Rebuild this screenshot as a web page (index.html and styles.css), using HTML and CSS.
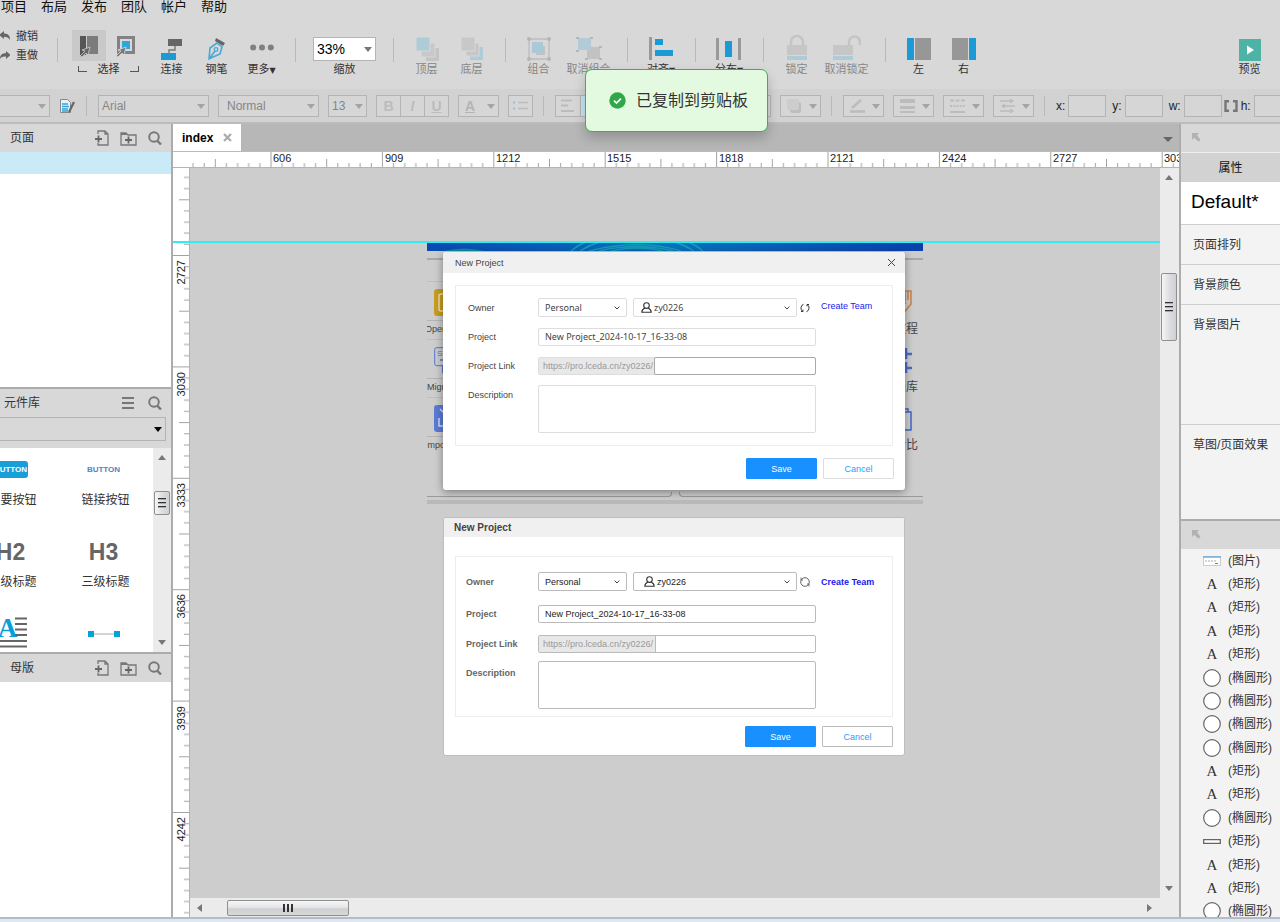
FILE: index.html
```html
<!DOCTYPE html>
<html lang="zh-CN">
<head>
<meta charset="utf-8">
<title>index</title>
<link rel="stylesheet" href="styles.css">
</head>
<body>
<svg class="defs" width="0" height="0" aria-hidden="true">
  <symbol id="search" viewBox="0 0 14 14"><circle cx="6" cy="6" r="4.800" fill="none" stroke="#777" stroke-width="1.900"/><path d="M9 9.500l4 4" stroke="#777" stroke-width="2.400"/></symbol>
  <symbol id="addpage" viewBox="0 0 14 16"><path d="M3 4V1h7l3 3v11H3v-2M10 1v3h3" fill="none" stroke="#777" stroke-width="1.300"/><path d="M0 9h7M3.500 5.500v7" stroke="#666" stroke-width="1.800"/></symbol>
  <symbol id="addfolder" viewBox="0 0 17 15"><path d="M1 14V2h5l2 2h8v10z" fill="none" stroke="#777" stroke-width="1.300"/><path d="M1 2h5l1 2H1z" fill="#777"/><path d="M5 9h7M8.500 5.500v7" stroke="#666" stroke-width="1.800"/></symbol>
  <symbol id="corner" viewBox="0 0 10 10"><path d="M1 0h7L6 2.200l3.500 4.600-2 2L3.200 4.800 1 7z" fill="#b2b2b2"/></symbol>
  <symbol id="chev" viewBox="0 0 6 4"><path d="M.6.6L3 3 5.400.6" fill="none" stroke="#444"/></symbol>
  <symbol id="user" viewBox="0 0 11 11"><circle cx="5.500" cy="3.600" r="2.800" fill="none" stroke="#333" stroke-width="1.100"/><path d="M3.800 6C2 7 .8 8 .8 10.200h9.400C10.200 8 9 7 7.200 6" fill="none" stroke="#333" stroke-width="1.100"/></symbol>
  <symbol id="box-oval" viewBox="0 0 18 18"><circle cx="9" cy="9" r="8.300" fill="#fff" stroke="#666" stroke-width="1.200"/></symbol>
</svg>

<nav class="menu">
  <button>项目</button><button>布局</button><button>发布</button><button>团队</button><button>帐户</button><button>帮助</button>
</nav>

<div class="toolbar">
  <div class="history">
    <button><svg width="10" height="10" viewBox="0 0 10 10"><path d="M4 0v2.500c4 0 6 2 6 6.500C8.500 6.500 7 5.800 4 5.800V8L-1 4z" fill="#666"/></svg>撤销</button>
    <button><svg width="10" height="10" viewBox="0 0 10 10"><path d="M6 1l4.500 4L6 9V6.500C3 6.300 1 7 0 9c0-4 2-5.700 6-5.700z" fill="#666"/></svg>重做</button>
  </div>
  <i class="sep"></i>
  <div class="select-tools">
    <div class="pair">
      <button class="on" aria-label="相交选中"><svg width="22" height="22" viewBox="0 0 22 22"><path d="M2 1h6v19H2z" fill="#555"/><path d="M9 1h11v18H9z" fill="#7c7c7c"/><path d="M2 21l5-5-3-1 8-3-2 8-2-2-4 4z" fill="#666" stroke="#ccc" stroke-width=".8"/></svg></button>
      <button aria-label="包含选中"><svg width="22" height="22" viewBox="0 0 22 22"><path d="M3.500 2.500h15v15h-15z" fill="#d8d8d8" stroke="#828282" stroke-width="3"/><path d="M7 6h8v8H7z" fill="#32a4dc"/><path d="M1 21l5-5-3-1 8-3-2 8-2-2-4 4z" fill="#777" stroke="#ddd" stroke-width=".8"/></svg></button>
    </div>
    <div class="bracket"><i></i><span>选择</span><i class="r"></i></div>
  </div>
  <button class="tool"><svg width="24" height="24" viewBox="0 0 24 24"><path d="M8 2h14v7H8z" fill="#666"/><path d="M15 9v4H9v4" fill="none" stroke="#777" stroke-width="1.400"/><path d="M1 16h15v7H1z" fill="#1c9ad6"/></svg>连接</button>
  <button class="tool"><svg width="24" height="24" viewBox="0 0 24 24"><path d="M11 1l9 5-2 3-8-5z" fill="#666"/><path d="M4 22L5 11l7-5 5 4-2 7-7 3zM4 22l6-8" fill="none" stroke="#46a9d8" stroke-width="1.600"/><circle cx="11" cy="12.500" r="1.800" fill="none" stroke="#46a9d8" stroke-width="1.300"/></svg>钢笔</button>
  <button class="tool"><svg width="24" height="24" viewBox="0 0 24 24"><g fill="#808080"><circle cx="3.200" cy="10.500" r="3"/><circle cx="12" cy="10.500" r="3"/><circle cx="20.800" cy="10.500" r="3"/></g></svg><span>更多<small>▼</small></span></button>
  <i class="sep"></i>
  <div class="zoom">
    <div class="sel"><select id="zoom"><option>33%</option></select></div>
    <label for="zoom">缩放</label>
  </div>
  <i class="sep"></i>
  <button class="tool off" disabled><svg width="24" height="24" viewBox="0 0 24 24"><path d="M11 11h13v13H11z" fill="#c4c4c4"/><path d="M6 6h14v14H6z" fill="#c8c8c8" stroke="#d8d8d8"/><path d="M1 0h14v14H1z" fill="#aecbd8" stroke="#d8d8d8"/></svg>顶层</button>
  <button class="tool off" disabled><svg width="24" height="24" viewBox="0 0 24 24"><path d="M10 10h13v13H10z" fill="#aecbd8"/><path d="M6 6h13v13H6z" fill="#c6c6c6" stroke="#d8d8d8"/><path d="M1 0h14v14H1z" fill="#c8c8c8" stroke="#d8d8d8"/></svg>底层</button>
  <i class="sep"></i>
  <button class="tool off" disabled><svg width="26" height="24" viewBox="0 0 26 24"><path d="M3 2h20v20H3z" fill="none" stroke="#bcbcbc" stroke-width="1.300"/><g fill="#b5b5b5"><circle cx="3" cy="2" r="2"/><circle cx="23" cy="2" r="2"/><circle cx="3" cy="22" r="2"/><circle cx="23" cy="22" r="2"/></g><path d="M10 9h9v9h-9z" fill="#c2c2c2"/><path d="M6 5h11v11H6z" fill="#aac9d7"/></svg>组合</button>
  <button class="tool wide off" disabled><svg width="26" height="24" viewBox="0 0 26 24"><path d="M11 10h13v12H11z" fill="#c2c2c2"/><path d="M2 1h13v12H2z" fill="#b3cbd6"/><g fill="#b5b5b5"><path d="M0 0h3v2H0zM14 0h3v2h-3zM0 13h3v2H0zM23 9h3v2h-3zM9 21h3v2H9zM23 21h3v2h-3z"/></g></svg>取消组合</button>
  <i class="sep"></i>
  <button class="tool mid"><svg width="26" height="24" viewBox="0 0 26 24"><path d="M1 0h3v23H1z" fill="#999"/><path d="M7 2h8v6H7zM7 13h18v6H7z" fill="#1c9ad6"/></svg><span>对齐<small>▼</small></span></button>
  <i class="sep"></i>
  <button class="tool mid"><svg width="26" height="24" viewBox="0 0 26 24"><path d="M0 1h3v22H0zM22 1h3v22h-3z" fill="#999"/><path d="M9 4h7v16H9z" fill="#1c9ad6"/></svg><span>分布<small>▼</small></span></button>
  <i class="sep"></i>
  <button class="tool off" disabled><svg width="22" height="26" viewBox="0 0 22 26"><path d="M5 12V7a6 6 0 0 1 12 0v5" fill="none" stroke="#c4c4c4" stroke-width="2.500"/><path d="M1 10h20v10H1z" fill="#c6c6c6"/><path d="M1 21h20v4H1z" fill="#aecbd8"/></svg>锁定</button>
  <button class="tool wide off" disabled><svg width="28" height="26" viewBox="0 0 28 26"><path d="M16 11V7a5.500 5.500 0 0 1 11 0v3" fill="none" stroke="#c4c4c4" stroke-width="2.500"/><path d="M0 10h20v10H0z" fill="#c6c6c6"/><path d="M0 21h20v4H0z" fill="#aecbd8"/></svg>取消锁定</button>
  <i class="sep"></i>
  <button class="tool"><svg width="24" height="24" viewBox="0 0 24 24"><path d="M0 1h7v22H0z" fill="#1c9ad6"/><path d="M8 1h16v22H8z" fill="#979797"/></svg>左</button>
  <button class="tool"><svg width="24" height="24" viewBox="0 0 24 24"><path d="M17 1h7v22h-7z" fill="#1c9ad6"/><path d="M0 1h16v22H0z" fill="#979797"/></svg>右</button>
  <button class="tool preview"><svg width="22" height="22" viewBox="0 0 22 22"><path d="M0 0h22v22H0z" fill="#4db3a4"/><path d="M8 6.500l7 4.500-7 4.500z" fill="#fff"/></svg>预览</button>
</div>

<div class="stylebar">
  <div class="sel w50"><select disabled aria-label="样式"><option></option></select></div>
  <button class="page-style" aria-label="样式管理"><svg width="17" height="16" viewBox="0 0 17 16"><path d="M1.500 1.500h7l3 3v10h-10z" fill="#e6f2f8" stroke="#888"/><path d="M3 6h6M3 8.500h7M3 11h6M3 13h6" stroke="#32a4dc" stroke-width="1.300"/><path d="M15 4l-5 10" stroke="#666" stroke-width="2.200"/></svg></button>
  <i class="sep"></i>
  <div class="sel w111"><select disabled aria-label="字体"><option>Arial</option></select></div>
  <div class="sel w101"><select disabled aria-label="字形"><option>Normal</option></select></div>
  <div class="sel w39"><select disabled aria-label="字号"><option>13</option></select></div>
  <div class="group w73"><button disabled><b>B</b></button><button disabled><b><em>I</em></b></button><button disabled><b><u>U</u></b></button></div>
  <button class="drop" disabled><u>A</u></button>
  <button class="box" disabled aria-label="列表"><svg width="15" height="12" viewBox="0 0 15 12"><path d="M5 2.500h10M5 8.500h10" stroke="#bcbcbc" stroke-width="1.500"/><path d="M0 1.500h2v2H0zM0 7.500h2v2H0z" fill="#8cc3dc"/></svg></button>
  <i class="sep"></i>
  <div class="group w75"><button disabled aria-label="左对齐"><svg width="14" height="14" viewBox="0 0 14 14"><path d="M0 1.500h11M0 6.500h7M0 12h13" stroke="#bcbcbc" stroke-width="2"/></svg></button><button class="lit" disabled aria-label="居中"></button><button disabled aria-label="右对齐"></button></div>
  <div class="group w82"><button disabled aria-label="顶部"></button><button disabled aria-label="中部"></button><button disabled aria-label="底部"></button></div>
  <button class="drop" disabled aria-label="填充"></button>
  <button class="drop" disabled aria-label="阴影"><svg width="15" height="14" viewBox="0 0 15 14"><rect x="3" y="3" width="11" height="11" rx="2" fill="#bebebe"/><rect x="0" y="0" width="12" height="11" rx="2" fill="#cdcdcd"/></svg></button>
  <i class="sep"></i>
  <button class="drop" disabled aria-label="线段颜色"><svg width="15" height="14" viewBox="0 0 15 14"><path d="M2 9l9-8M0 12.500h15" stroke="#bcbcbc" stroke-width="2.500"/></svg></button>
  <button class="drop" disabled aria-label="线宽"><svg width="15" height="14" viewBox="0 0 15 14"><path d="M0 0h15v4H0zM0 7h15v3H0zM0 12h15v2H0z" fill="#bcbcbc"/></svg></button>
  <button class="drop" disabled aria-label="线段类型"><svg width="15" height="14" viewBox="0 0 15 14"><path d="M0 1.500h15" stroke="#bcbcbc" stroke-width="2" stroke-dasharray="4 1.500"/><path d="M0 7h15" stroke="#bcbcbc" stroke-width="2" stroke-dasharray="2 1.200"/><path d="M0 13h15" stroke="#bcbcbc" stroke-width="2"/></svg></button>
  <button class="drop" disabled aria-label="箭头样式"><svg width="15" height="14" viewBox="0 0 15 14"><path d="M0 2h13M2 7h13M0 12h13M10 0l3 2-3 2M5 5L2 7l3 2M10 10l3 2-3 2" fill="none" stroke="#bcbcbc" stroke-width="1.300"/></svg></button>
  <i class="sep"></i>
  <div class="coords">
    <label>x:<input disabled></label><label>y:<input disabled></label><label>w:<input disabled></label>
    <svg width="14" height="12" viewBox="0 0 14 12"><path d="M5 1.200H1.500v9.600H5M9 1.200h3.500v9.600H9" fill="none" stroke="#777" stroke-width="2.400"/></svg>
    <label>h:<input disabled></label>
  </div>
</div>

<div class="workspace">
  <aside class="left">
    <section class="pages">
      <header><h2>页面</h2><button aria-label="添加页面"><svg width="14" height="16"><use href="#addpage"/></svg></button><button aria-label="添加文件夹"><svg width="17" height="15"><use href="#addfolder"/></svg></button><button aria-label="搜索"><svg width="14" height="14"><use href="#search"/></svg></button></header>
      <div class="current-page"></div>
    </section>
    <section class="library">
      <header class="near"><h2>元件库</h2><button aria-label="选项"><svg width="12" height="12" viewBox="0 0 12 12"><path d="M0 1h12M0 6h12M0 11h12" stroke="#777" stroke-width="2"/></svg></button><button aria-label="搜索"><svg width="14" height="14"><use href="#search"/></svg></button></header>
      <div class="lib-pick"><div class="sel"><select aria-label="选择元件库"><option></option></select></div></div>
      <div class="lib-body">
        <div class="widgets">
          <figure><div><span class="btn-pic">BUTTON</span></div><figcaption>主要按钮</figcaption></figure>
          <figure><div><span class="link-pic">BUTTON</span></div><figcaption>链接按钮</figcaption></figure>
          <figure><div class="h">H2</div><figcaption>二级标题</figcaption></figure>
          <figure><div class="h">H3</div><figcaption>三级标题</figcaption></figure>
          <figure><div class="para"><b>A</b><svg width="38" height="32" viewBox="0 0 38 32"><path d="M26 1.500h12M26 7h12M26 12.500h12M26 18h12M0 24h38M0 29.500h38" stroke="#666" stroke-width="2"/></svg></div></figure>
          <figure><div><svg width="32" height="6" viewBox="0 0 32 6"><path d="M3 3h26" stroke="#aaa"/><path d="M0 0h6v6H0zM26 0h6v6h-6z" fill="#069fdc"/></svg></div></figure>
        </div>
        <div class="vbar lib-bar"><i class="up"></i><i class="thumb"></i><i class="down"></i></div>
      </div>
    </section>
    <section class="masters">
      <header><h2>母版</h2><button aria-label="添加母版"><svg width="14" height="16"><use href="#addpage"/></svg></button><button aria-label="添加文件夹"><svg width="17" height="15"><use href="#addfolder"/></svg></button><button aria-label="搜索"><svg width="14" height="14"><use href="#search"/></svg></button></header>
    </section>
  </aside>

  <main class="center">
    <div class="tabs"><div class="tab">index<button aria-label="关闭"><svg width="9" height="9" viewBox="0 0 9 9"><path d="M1 1l7 7M8 1L1 8" stroke="#aaa" stroke-width="2.200"/></svg></button></div><i class="tab-more"></i></div>
    <svg class="ruler-h" aria-hidden="true">
      <defs><pattern id="th" x="97.500" y="0" width="111.400" height="16" patternUnits="userSpaceOnUse"><path d="M.5 0v16M56.200 7v9M11.600 11v5M22.800 11v5M33.900 11v5M45.100 11v5M67.300 11v5M78.500 11v5M89.600 11v5M100.800 11v5" stroke="#a2a2a2"/></pattern></defs>
      <rect x="17" width="100%" height="16" fill="url(#th)"/>
      <text x="100" y="10">606</text><text x="212" y="10">909</text><text x="323" y="10">1212</text><text x="434" y="10">1515</text><text x="546" y="10">1818</text><text x="657" y="10">2121</text><text x="769" y="10">2424</text><text x="880" y="10">2727</text><text x="991" y="10">3030</text>
    </svg>
    <div class="mid-row">
      <svg class="ruler-v" aria-hidden="true">
        <defs><pattern id="tv" x="0" y="87" width="16" height="111.400" patternUnits="userSpaceOnUse"><path d="M0 .5h16M6 56.200h10M11 11.600h5M11 22.800h5M11 33.900h5M11 45.100h5M11 67.300h5M11 78.500h5M11 89.600h5M11 100.800h5" stroke="#a2a2a2"/></pattern></defs>
        <rect width="16" height="100%" fill="url(#tv)"/>
        <g text-anchor="end"><text transform="translate(12 92) rotate(-90)">2727</text><text transform="translate(12 204) rotate(-90)">3030</text><text transform="translate(12 315) rotate(-90)">3333</text><text transform="translate(12 426) rotate(-90)">3636</text><text transform="translate(12 538) rotate(-90)">3939</text><text transform="translate(12 649) rotate(-90)">4242</text></g>
      </svg>
      <div class="stage">
        <div class="canvas">
          <div class="shot">
            <svg class="banner" width="496" height="8" viewBox="0 0 496 8"><defs><linearGradient id="bg"><stop offset="0" stop-color="#0a49b4"/><stop offset=".5" stop-color="#0872c0"/><stop offset="1" stop-color="#0b3fae"/></linearGradient></defs><path d="M0 0h496v8H0z" fill="url(#bg)"/><path d="M16 8q22-5 42 0z" fill="#0c8da6"/><g fill="none" stroke="#159db9" stroke-width="1.500"><path d="M144 8q8-7 18-10M153 8q9-6 20-9M162 8q50-13 92 0M172 8q38-9 74 0M184 8q28-6 52 0M276 8q-8-7-18-10M267 8q-9-6-20-9"/></g></svg>
            <div class="shot-body">
              <div class="cells"><div><svg width="26" height="27" viewBox="0 0 26 27"><rect width="26" height="27" rx="3" fill="#c79d22"/><rect x="5" y="5" width="16" height="17" rx="2" fill="none" stroke="#efe2ac" stroke-width="1.500"/></svg><span class="cut">Open</span></div><div><svg width="26" height="27" viewBox="0 0 26 27"><rect x=".7" y=".7" width="24" height="18" rx="2" fill="none" stroke="#5674cc"/><path d="M8 18h18v9H10q-2 0-2-3z" fill="#5674cc"/><path d="M6 13h4" stroke="#5674cc" stroke-width="1.500"/><text x="3" y="9" class="tiny">STD</text></svg><span>Migrate</span></div><div><svg width="26" height="27" viewBox="0 0 26 27"><rect width="26" height="27" rx="3" fill="#5b7bd6"/><path d="M6 4l6 6M5 13v8h8M12 13v9" fill="none" stroke="#d5dcf0" stroke-width="1.500"/></svg><span class="cut">Import</span></div></div>
              <div class="cells cells-end"><div><svg width="26" height="27" viewBox="0 0 26 27"><path d="M10 14V2h15v13l-8 10M19 2v10M22 2v9M12 14l8 0" fill="none" stroke="#cc8344" stroke-width="1.500"/></svg><span>教程</span></div><div><svg width="26" height="27" viewBox="0 0 26 27"><path d="M20 1v11M15 7h11M20 15v11M15 21h11" stroke="#4a6ecb" stroke-width="2.500"/></svg><span>画库</span></div><div><svg width="26" height="27" viewBox="0 0 26 27"><path d="M8 7h17v18H8zM22 7V4h-5" fill="none" stroke="#3f66cc" stroke-width="1.500"/></svg><span>对比</span></div></div>
            </div>
            <div class="shot-foot"><i></i><i></i></div>
          </div>

          <form class="dialog top">
            <header><h3>New Project</h3><button type="button" aria-label="Close"><svg width="9" height="9" viewBox="0 0 9 9"><path d="M1 1l7 7M8 1L1 8" stroke="#444"/></svg></button></header>
            <div class="fields">
              <label for="o1">Owner</label>
              <div class="owner"><div class="pick p1"><select id="o1"><option>Personal</option></select><svg width="6" height="4"><use href="#chev"/></svg></div><div class="pick p2"><svg class="face" width="11" height="11"><use href="#user"/></svg><select aria-label="Account"><option>zy0226</option></select><svg width="6" height="4"><use href="#chev"/></svg></div><button type="button" class="refresh" aria-label="Refresh"><svg width="10" height="10" viewBox="0 0 10 10"><path d="M3.500 1.300A4 4 0 0 0 2.300 8M6.500 8.700A4 4 0 0 0 7.700 2M1 8.500h2V6.700M9 1.500H7v1.800" fill="none" stroke="#333"/></svg></button><a href="#">Create Team</a></div>
              <label for="n1">Project</label><input id="n1" value="New Project_2024-10-17_16-33-08">
              <label for="l1">Project Link</label><div class="link"><span>https://pro.lceda.cn/zy0226/</span><input id="l1"></div>
              <label for="d1">Description</label><textarea id="d1"></textarea>
            </div>
            <footer><button type="button" class="primary">Save</button><button type="button">Cancel</button></footer>
          </form>

          <form class="dialog bottom">
            <header><h3>New Project</h3></header>
            <div class="fields">
              <label for="o2">Owner</label>
              <div class="owner"><div class="pick p1"><select id="o2"><option>Personal</option></select><svg width="6" height="4"><use href="#chev"/></svg></div><div class="pick p2"><svg class="face" width="11" height="11"><use href="#user"/></svg><select aria-label="Account"><option>zy0226</option></select><svg width="6" height="4"><use href="#chev"/></svg></div><button type="button" class="refresh" aria-label="Refresh"><svg width="10" height="10" viewBox="0 0 10 10"><circle cx="5" cy="5" r="4.300" fill="none" stroke="#555" stroke-width=".9"/><path d="M1 .5v2.500h2M9 9.500V7H7" fill="none" stroke="#555" stroke-width=".8"/></svg></button><a href="#">Create Team</a></div>
              <label for="n2">Project</label><input id="n2" value="New Project_2024-10-17_16-33-08">
              <label for="l2">Project Link</label><div class="link"><span>https://pro.lceda.cn/zy0226/</span><input id="l2"></div>
              <label for="d2">Description</label><textarea id="d2"></textarea>
            </div>
            <footer><button type="button" class="primary">Save</button><button type="button">Cancel</button></footer>
          </form>
        </div>
        <div class="hbar"><i class="prev"></i><i class="thumb"></i><i class="next"></i></div>
      </div>
      <div class="vbar main-bar"><i class="up"></i><i class="thumb"></i><i class="down"></i></div>
      <i class="guide"></i>
    </div>
  </main>

  <aside class="right">
    <div class="dock"><svg width="10" height="10"><use href="#corner"/></svg></div>
    <div class="prop-tab">属性</div>
    <div class="style-name">Default*</div>
    <div class="prop">页面排列</div>
    <div class="prop">背景颜色</div>
    <div class="prop tall">背景图片</div>
    <div class="prop last">草图/页面效果</div>
    <div class="dock outline"><svg width="10" height="10"><use href="#corner"/></svg></div>
    <ul class="tree">
      <li><svg width="18" height="10" viewBox="0 0 18 10"><path d="M.5.5h17v9H.5z" fill="#fff" stroke="#ccc"/><path d="M0 1h18" stroke="#6aaee0" stroke-width="1.500"/><path d="M2 5h12" stroke="#aaa" stroke-dasharray="2 1"/><path d="M12 7h3v1h-3z" fill="#3a92dc"/></svg>(图片)</li>
      <li><b>A</b>(矩形)</li><li><b>A</b>(矩形)</li><li><b>A</b>(矩形)</li><li><b>A</b>(矩形)</li>
      <li><svg width="18" height="18"><use href="#box-oval"/></svg>(椭圆形)</li><li><svg width="18" height="18"><use href="#box-oval"/></svg>(椭圆形)</li><li><svg width="18" height="18"><use href="#box-oval"/></svg>(椭圆形)</li><li><svg width="18" height="18"><use href="#box-oval"/></svg>(椭圆形)</li>
      <li><b>A</b>(矩形)</li><li><b>A</b>(矩形)</li>
      <li><svg width="18" height="18"><use href="#box-oval"/></svg>(椭圆形)</li>
      <li><svg width="18" height="5" viewBox="0 0 18 5"><path d="M.7.700h16.600v3.600H.7z" fill="#fff" stroke="#666" stroke-width="1.300"/></svg>(矩形)</li>
      <li><b>A</b>(矩形)</li><li><b>A</b>(矩形)</li>
      <li><svg width="18" height="18"><use href="#box-oval"/></svg>(椭圆形)</li>
    </ul>
  </aside>
</div>
<div class="taskedge"></div>

<div class="toast" role="status"><svg width="17" height="17" viewBox="0 0 17 17"><circle cx="8.500" cy="8.500" r="8.200" fill="#2fa84a"/><path d="M5 8.700l2.500 2.400L12 6.600" fill="none" stroke="#fff" stroke-width="1.700"/></svg>已复制到剪贴板</div>
</body>
</html>
```
FILE: styles.css
```css
* { box-sizing: border-box; }
body {
  margin: 0;
  height: 100vh;
  display: flex;
  flex-direction: column;
  overflow: hidden;
  position: relative;
  background: #d8d8d8;
  color: #333;
  font: 12px/16px "Liberation Sans", "Noto Sans CJK SC", sans-serif;
}
button, input, select, textarea {
  font: inherit;
  color: inherit;
  margin: 0;
  padding: 0;
  border: 0;
  background: none;
  border-radius: 0;
  min-width: 0;
}
select { appearance: none; width: 100%; height: 100%; opacity: 1; }
svg { display: block; flex: none; }
h2, h3, figure, ul { margin: 0; padding: 0; font-weight: normal; }
i { font-style: normal; }
.defs { position: absolute; }

.menu { display: flex; gap: 14px; height: 16px; padding-left: 1px; flex: none; }
.menu button { font-size: 13px; line-height: 14px; height: 14px; color: #111; white-space: nowrap; }

/* main toolbar */
.toolbar { display: flex; height: 73px; flex: none; padding-top: 14px; font-size: 11px; }
.history { display: flex; flex-direction: column; gap: 3px; width: 46px; flex: none; }
.history button { display: flex; align-items: center; gap: 6px; height: 16px; line-height: 16px; }
.history button:first-child { margin-top: -2px; }
.sep { width: 1px; height: 24px; margin: 8px 10px 0 11px; background: #b9b9b9; flex: none; }
.select-tools { width: 71px; margin: 0 6px 0 4px; flex: none; }
.pair { display: flex; gap: 4px; height: 31px; }
.pair button { width: 34px; display: grid; place-items: center; }
.pair .on { background: #c9c9c9; }
.bracket { display: flex; justify-content: space-between; padding: 0 4px 0 6px; align-items: center; height: 16px; }
.bracket i { width: 9px; height: 6px; border: solid #555; border-width: 0 0 1px 1px; }
.bracket .r { border-width: 0 1px 1px 0; }
.tool { width: 45px; flex: none; display: flex; flex-direction: column; align-items: center; height: 47px; justify-content: flex-end; line-height: 16px; white-space: nowrap; }
.tool small { font: 8px/8px "DejaVu Sans", sans-serif; }
.tool.wide { width: 55px; }
.tool.mid { width: 46px; }
.tool.off { color: #868686; }
.preview { margin: 0 8px 0 auto; }
.zoom { width: 76px; padding: 7px 6px 0 7px; flex: none; text-align: center; }
.zoom label { display: block; line-height: 16px; }
.zoom .sel { height: 24px; background: #fff; color: #000; font-size: 14px; }
.sel { position: relative; border: 1px solid #b4b4b4; flex: none; }
.sel select { padding: 0 14px 0 3px; }
.sel::after, .drop::after {
  content: "";
  position: absolute;
  right: 3px;
  top: 50%;
  border: 4px solid transparent;
  border-top: 5px solid #777;
  border-bottom: 0;
  margin-top: -2px;
}

/* style bar */
.stylebar { display: flex; gap: 9px; align-items: center; height: 35px; flex: none; background: #d2d2d2; border-bottom: 2px solid #bcbcbc; overflow: hidden; }
.stylebar .sep { height: 20px; margin: 0 2px 0 1px; }
.stylebar .sel, .drop, .box, .group { height: 22px; border: 1px solid #b4b4b4; flex: none; background: #d6d6d6; }
.stylebar .sel { color: #868686; }
.stylebar .sel::after, .drop::after { border-top-color: #a4a4a4; }
.stylebar .w50 { width: 50px; border-left: 0; }
.page-style { width: 17px; flex: none; }
.w111 { width: 111px; }
.w101 { width: 101px; }
.w101 select { padding-left: 8px; }
.stylebar .w39 { width: 39px; }
.w73 { width: 73px; }
.w75 { width: 75px; }
.w82 { width: 82px; }
.group { display: flex; }
.group button { flex: 1; display: grid; place-items: center; color: #bcbcbc; font-size: 14px; line-height: 16px; }
.group button + button { border-left: 1px solid #b4b4b4; }
.group .lit { background: #c4e6f3; }
.drop { position: relative; width: 41px; display: flex; align-items: center; padding-left: 6px; color: #b4b4b4; font-weight: bold; font-size: 14px; }
.box { width: 25px; display: grid; place-items: center; }
.coords { display: flex; align-items: center; gap: 6px; flex: none; }
.coords label { display: flex; align-items: center; gap: 3px; color: #222; }
.coords input { width: 38px; height: 22px; border: 1px solid #b4b4b4; background: #d6d6d6; }
.coords svg { margin: 0 -3px 0 -4px; }

.workspace { display: flex; flex: 1; min-height: 0; }

/* left panels */
.left { width: 173px; flex: none; border-right: 2px solid #acacac; display: flex; flex-direction: column; background: #fff; }
.left header { display: flex; align-items: center; gap: 11px; height: 28px; padding: 0 9px 0 10px; background: #d8d8d8; flex: none; }
.left header.near { padding-left: 4px; gap: 14px; }
.left h2 { flex: 1; font-size: 12px; line-height: 16px; }
.pages { height: 265px; flex: none; border-bottom: 2px solid #acacac; }
.current-page { height: 22px; background: #cbeaf7; }
.library { height: 265px; flex: none; border-bottom: 2px solid #acacac; display: flex; flex-direction: column; }
.lib-pick { background: #d8d8d8; height: 31px; padding: 0 5px 7px 0; flex: none; }
.lib-pick .sel { height: 24px; border-left: 0; }
.lib-pick .sel::after { border-top-color: #000; }
.lib-body { flex: 1; min-height: 0; display: flex; overflow: hidden; }
.widgets { flex: 1; min-width: 0; margin-left: -34px; display: grid; grid-template-columns: 93px 93px; grid-auto-rows: 82px; text-align: center; }
.widgets figure > div { height: 40px; display: flex; align-items: center; justify-content: center; padding: 3px 4px 0 0; }
.widgets figcaption { line-height: 24px; }
.btn-pic { background: #189ed9; color: #fff; border-radius: 3px; font: bold 8px/17px "Liberation Sans", sans-serif; width: 34px; }
.link-pic { color: #4a86c5; font: bold 8px/16px "Liberation Sans", sans-serif; }
.widgets figure > .h { font-size: 23px; font-weight: bold; color: #666; }
.widgets figure > .para { display: grid; padding: 2px 10px 0 0; }
.para > * { grid-area: 1 / 1; }
.para b { font: bold 27px/28px "Liberation Serif", serif; color: #069fdc; z-index: 1; align-self: start; }
.masters { flex: 1; }

/* scroll bars */
.vbar { display: flex; flex-direction: column; align-items: center; background: #ebebeb; flex: none; }
.lib-bar { width: 18px; padding: 7px 0; }
.main-bar { width: 19px; padding: 7px 1px 26px 0; }
.thumb { border: 1px solid #8f8f8f; border-radius: 2px; display: grid; place-items: center; }
.vbar .thumb { width: 16px; margin-bottom: auto; background: linear-gradient(90deg, #f6f6f6, #dcdde0 55%, #cfd0d3); }
.vbar .thumb::after { content: ""; width: 8px; height: 10px; background: repeating-linear-gradient(#333 0 1px, #aaa 1px 2px, transparent 2px 4px); }
.lib-bar .thumb { height: 24px; margin-top: 31px; }
.main-bar .thumb { height: 68px; margin-top: 93px; }
.up { border: 4px solid transparent; border-bottom: 5px solid #777; border-top: 0; }
.down { border: 4px solid transparent; border-top: 5px solid #777; border-bottom: 0; }
.hbar { height: 19px; flex: none; background: #ebebeb; display: flex; align-items: center; padding: 0 8px 0 7px; }
.hbar .thumb { width: 122px; height: 16px; margin: 0 auto 0 25px; background: linear-gradient(#f6f6f6, #e2e3e5 50%, #cfd0d3 55%, #d6d7d9); }
.hbar .thumb::after { content: ""; width: 10px; height: 8px; background: repeating-linear-gradient(90deg, #333 0 2px, transparent 2px 4px); }
.prev { border: 4px solid transparent; border-right: 5px solid #777; border-left: 0; }
.next { border: 4px solid transparent; border-left: 5px solid #777; border-right: 0; }

/* centre */
.center { flex: 1; min-width: 0; display: flex; flex-direction: column; }
.tabs { height: 27px; flex: none; background: #b7b7b7; display: flex; align-items: center; justify-content: space-between; padding-right: 6px; }
.tab { height: 27px; width: 68px; background: #fff; display: flex; align-items: center; justify-content: space-between; padding: 0 9px; font-weight: bold; color: #000; }
.tab-more { border: 5px solid transparent; border-top-color: #666; border-bottom: 0; margin-top: 4px; }
.ruler-h { width: 100%; height: 17px; background: #fff; border-top: 1px solid #bbb; border-bottom: 1px solid #b4b4b4; }
.ruler-h text, .ruler-v text { font: 11px "Liberation Sans", sans-serif; fill: #222; }
.mid-row { display: flex; flex: 1; min-height: 0; position: relative; }
.ruler-v { width: 17px; height: 100%; background: #fff; border-right: 1px solid #b4b4b4; }
.stage { flex: 1; min-width: 0; display: flex; flex-direction: column; }
.canvas { flex: 1; position: relative; background: #cdcdcd; overflow: hidden; }
.guide { position: absolute; left: 0; right: 19px; top: 73px; height: 2px; background: #2deef2; }

/* artboard picture */
.shot { position: absolute; left: 237px; top: 75px; width: 496px; height: 261px; display: flex; flex-direction: column; color: #444; font-size: 9px; }
.shot-body { flex: 1; margin-top: 7px; border-top: 2px solid #a8a8a8; display: flex; justify-content: space-between; }
.cells { width: 40px; padding-top: 21px; overflow: hidden; }
.cells div { height: 58px; padding: 7px 0 0; border-top: 1px solid #bebebe; display: flex; flex-direction: column; }
.cells svg { margin-left: 7px; }
.cells span { border-top: 1px solid #b4b4b4; margin-top: 4px; line-height: 16px; white-space: nowrap; }
.cells .cut { text-indent: -2px; }
.cells-end svg { margin-left: 3px; }
.cells-end div { border-top-color: #cdcdcd; }
.cells-end span { font-size: 12px; text-align: right; padding-right: 5px; border-top-color: #cdcdcd; }
.tiny { font: 8px "Liberation Sans", sans-serif; fill: #5674cc; }
.shot-foot { display: flex; gap: 7px; height: 12px; border-bottom: 4px solid #b9b9b9; padding-bottom: 3px; }
.shot-foot i { flex: 1; border: solid #999; border-width: 0 1px 1px 0; border-radius: 0 0 4px 0; }
.shot-foot i + i { border-width: 0 0 1px 1px; border-radius: 0 0 0 4px; }

/* project dialogs */
.dialog { position: absolute; left: 253px; width: 462px; background: #fff; border-radius: 3px; overflow: hidden; font-size: 9px; line-height: 12px; color: #444; }
.dialog.top { top: 84px; height: 238px; box-shadow: 0 2px 8px #0006; }
.dialog.bottom { top: 349px; height: 239px; border: 1px solid #bdbdbd; }
.dialog header { display: flex; justify-content: space-between; align-items: center; height: 21px; background: #f0f0f0; padding: 0 9px 0 12px; }
.dialog.bottom header { height: 19px; padding-left: 10px; }
.dialog h3 { font-size: inherit; }
.dialog.bottom h3 { font-size: 10px; font-weight: bold; }
.fields { margin: 12px 12px 0; height: 161px; border: 1px solid #ededed; padding: 7px 0 0 12px; display: grid; grid-template-columns: 70px 278px; grid-template-rows: 29px 29px 30px 56px; align-items: center; }
.bottom .fields { margin: 19px 11px 0; padding: 9px 0 0 10px; grid-template-columns: 72px 278px; grid-template-rows: 31px 34px 25px 58px; }
.bottom .fields > label { font-weight: bold; color: #666; }
.fields > label[for^="d"] { align-self: start; padding-top: 8px; }
.bottom .fields > label[for^="d"] { padding-top: 11px; }
.fields > input, .fields textarea, .link, .pick { border: 1px solid #ddd; border-radius: 2px; background: #fff; width: 100%; height: 18px; }
.bottom .fields > input, .bottom textarea, .bottom .link, .bottom .pick { border-color: #bbb; }
.fields > input { padding-left: 6px; }
.top .fields > input, .top .pick { font-family: "Noto Sans", sans-serif; }
.bottom .fields > input, .bottom select { color: #222; }
.fields textarea { resize: none; display: block; height: 48px; }
.owner { display: flex; height: 19px; align-items: center; white-space: nowrap; }
.fields .pick { display: flex; align-items: center; padding: 0 6px; flex: none; height: 19px; }
.fields .p1 { width: 89px; margin-right: 6px; }
.fields .p2 { width: 164px; padding-left: 7px; gap: 2px; }
.bottom .p2 { padding-left: 10px; }
.refresh { flex: none; margin: 0 11px 0 3px; }
.owner a { flex: none; color: #1a1aef; text-decoration: none; }
.top .owner a { padding-bottom: 4px; }
.bottom .owner a { font-weight: bold; }
.link { display: flex; }
.link span { width: 116px; flex: none; background: #e8e8e8; color: #999; line-height: 16px; padding-left: 4px; }
.link input { flex: 1; border-left: 1px solid #bbb; }
.top .link input { border: 1px solid #aaa; border-radius: 2px; margin: -1px; }
.dialog footer { display: flex; justify-content: flex-end; gap: 6px; padding: 12px 11px 0; }
.bottom footer { padding: 9px 11px 0; }
.dialog footer button { width: 71px; height: 21px; border: 1px solid #ddd; border-radius: 1px; color: #2e9bff; }
.bottom footer button { border-color: #bbb; }
.dialog footer .primary { background: #1890ff; border-color: #1890ff; color: #fff; }

/* right panel */
.right { width: 101px; flex: none; border-left: 2px solid #acacac; background: #f3f3f3; display: flex; flex-direction: column; overflow: hidden; }
.dock { height: 28px; padding: 9px 10px; background: #d8d8d8; flex: none; }
.prop-tab { height: 30px; line-height: 30px; border-top: 1px solid #eee; background: #d2d2d2; text-align: center; color: #111; flex: none; }
.style-name { height: 42px; line-height: 40px; padding-left: 10px; background: #fff; color: #000; font-size: 19px; flex: none; }
.prop { height: 40px; flex: none; border-top: 1px solid #cfcfcf; padding: 12px 0 0 12px; white-space: nowrap; }
.prop.tall { height: 120px; }
.prop.last { height: 95px; }
.outline { height: 30px; border-top: 2px solid #acacac; }
.tree { flex: 1; min-height: 0; list-style: none; margin-bottom: -6px; display: grid; grid-template-rows: repeat(16, minmax(0, 1fr)); }
.tree li { display: grid; grid-template-columns: 18px 1fr; gap: 7px; align-items: center; padding-left: 22px; white-space: nowrap; }
.tree b { font: 15px/16px "Liberation Serif", serif; text-align: center; }

.taskedge { height: 5px; flex: none; background: #dfe7f2; border-top: 2px solid #b4bcc6; z-index: 1; }

.toast { position: absolute; left: 585px; top: 69px; height: 63px; display: flex; align-items: center; gap: 10px; padding: 0 19px 0 23px; background: #e3f9e0; border: 1px solid #41ad55; border-radius: 7px; box-shadow: 0 6px 12px #0003; font-size: 16px; color: #333; white-space: nowrap; }
```
